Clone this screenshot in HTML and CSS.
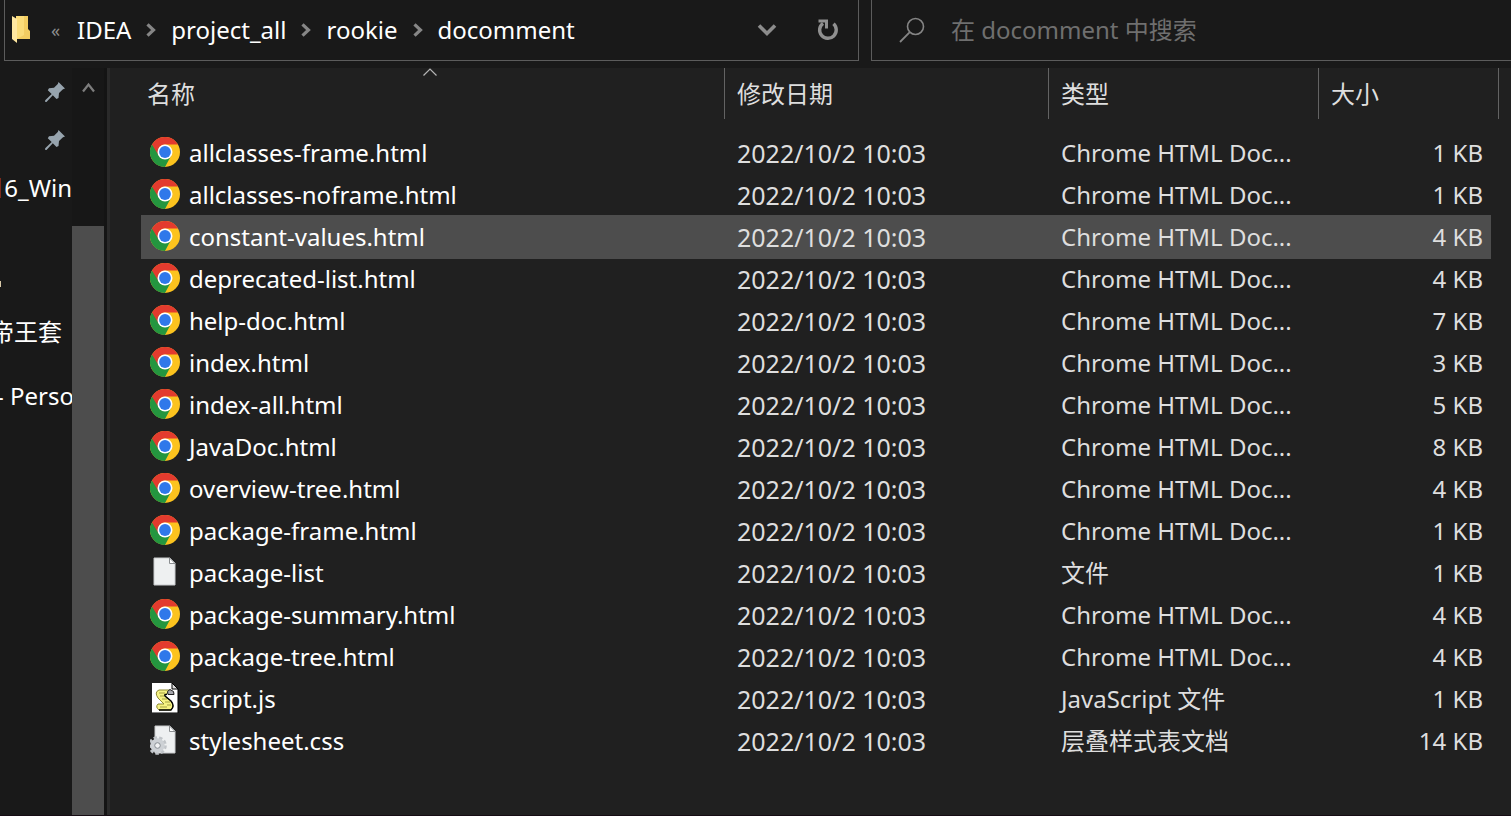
FILE: index.html
```html
<!DOCTYPE html>
<html lang="zh-CN">
<head>
<meta charset="utf-8">
<title>docomment</title>
<link rel="stylesheet" href="styles.css">
</head>
<body>
<svg class="defs" aria-hidden="true">
  <defs>
    <symbol id="chrome" viewBox="0 0 30 30">
      <circle cx="15" cy="15" r="15" fill="#fcc31e"/>
      <path d="M15 15 L21.2 18.6 L15 30 A15 15 0 0 1 2 7.5 Z" fill="#24963f"/>
      <path d="M2 7.5 A15 15 0 0 1 28 7.5 L15 7.6 A7.4 7.4 0 0 0 8.6 18.6 Z" fill="#e33b2e"/>
      <circle cx="15" cy="15" r="7.5" fill="#fff"/>
      <circle cx="15" cy="15" r="5.9" fill="#2f78ea"/>
    </symbol>
    <symbol id="page" viewBox="0 0 30 30">
      <path d="M4 1H20L25 6V28H4Z" fill="#eef0f1" stroke="#c9cbcd" stroke-width="1"/>
      <path d="M19.500 1V6.500H25Z" fill="#fff" stroke="#8b8e91" stroke-width="1"/>
    </symbol>
    <symbol id="script" viewBox="0 0 30 30">
      <path d="M2 0H22L28 6V30H2Z" fill="#fff"/>
      <path d="M28 6V30H2" fill="none" stroke="#000" stroke-width="1"/>
      <path d="M22 0V6H28Z" fill="#ddd" stroke="#000" stroke-width="1"/>
      <path d="M9 7H20Q17 9 17 11Q14 11 15 13L21 18Q25 23 21 27H9Q5 24 8 21H14L8 15Q4 9 9 7Z" fill="#f6f283" stroke="#8d8930" stroke-width="1"/>
      <path d="M20 6.500Q16 8 18 11.500H24Q25 8 20 6.500Z" fill="#a6a6ac" stroke="#222" stroke-width="1"/>
      <path d="M9 10H15M10 13H14M12 16H17M15 19H20M17 22H21M10 24H17" stroke="#a39f43" stroke-width="1"/>
      <path d="M17 11.500Q14 11 15 13L21 18Q25 23 21 27H9" fill="none" stroke="#000" stroke-width="1.400"/>
    </symbol>
    <symbol id="style" viewBox="0 0 30 30">
      <path d="M5 1H20L25 6V28H5Z" fill="#eef0f1" stroke="#c9cbcd"/>
      <path d="M19.500 1V6.500H25Z" fill="#fff" stroke="#8b8e91"/>
      <g class="gear">
        <circle cx="7.500" cy="20.500" r="7.800" fill="none" stroke="#c0c4c8" stroke-width="3" stroke-dasharray="3.300 2.150"/>
        <circle cx="7.500" cy="20.500" r="5" fill="#e9ebed" stroke="#cdd1d5" stroke-width="4.400"/>
        <circle cx="7.500" cy="20.500" r="2.800" fill="#f1f2f3" stroke="#858b91"/>
      </g>
    </symbol>
    <symbol id="pin" viewBox="0 0 20 20">
      <path d="M13.500 0L20 6.500L18 7.300L14 11L13.500 16L11.500 17L7.800 13.200L1.500 20L0 19.800L.2 18.300L6.700 12L2.800 8.200L4 6.200L9 5.800L12.800 2Z" fill="#97a4ae"/>
    </symbol>
    <symbol id="crumb" viewBox="0 0 10 14">
      <path d="M1.500 1.300L7.500 7L1.500 12.700" fill="none" stroke="#868686" stroke-width="3.200"/>
    </symbol>
  </defs>
</svg>
<div class="window">
  <header class="topbar">
    <nav class="address" aria-label="路径">
      <svg class="folder" viewBox="0 0 19 28"><path d="M4 0H16V13L18 15V23H4Z" fill="#f3cd62"/><path d="M4 0H12V19L5 23Z" fill="#fbdc79"/><path d="M0 0L5 3V27L0 23Z" fill="#ffe7a0"/></svg>
      <span class="more">«</span>
      <a href="#">IDEA</a>
      <svg class="crumb"><use href="#crumb"/></svg>
      <a href="#">project_all</a>
      <svg class="crumb"><use href="#crumb"/></svg>
      <a href="#">rookie</a>
      <svg class="crumb"><use href="#crumb"/></svg>
      <a href="#">docomment</a>
      <span class="tools">
        <button type="button" aria-label="历史记录"><svg width="20" height="14" viewBox="0 0 20 14"><path d="M2 2.500L10 10.500L18 2.500" fill="none" stroke="#8c8c8c" stroke-width="3.600"/></svg></button>
        <button type="button" aria-label="刷新"><svg width="22" height="24" viewBox="0 0 22 24"><path d="M16.500 5.800A8.300 8.300 0 1 1 6 5.300" fill="none" stroke="#909090" stroke-width="3.400"/><path d="M1.500 3H9.500V10.500" fill="none" stroke="#909090" stroke-width="3"/></svg></button>
      </span>
    </nav>
    <form class="search">
      <svg width="26" height="26" viewBox="0 0 26 26"><circle cx="16.500" cy="9.500" r="8" fill="none" stroke="#858585" stroke-width="1.600"/><path d="M10.800 15.200L1 25" stroke="#858585" stroke-width="1.800"/></svg>
      <input type="text" aria-label="搜索" placeholder="在 docomment 中搜索">
    </form>
  </header>
  <div class="body">
    <aside class="sidebar">
      <div class="side-item"><svg class="pin"><use href="#pin"/></svg></div>
      <div class="side-item"><svg class="pin"><use href="#pin"/></svg></div>
      <div class="side-item"><i class="mark red"></i><span class="label">6_Win</span></div>
      <div class="side-item"></div>
      <div class="side-item"><i class="mark pale"></i></div>
      <div class="side-item cut-cjk">帝王套</div>
      <div class="side-item cut-dash">- Perso</div>
    </aside>
    <div class="scrollbar">
      <button type="button" aria-label="向上滚动"><svg width="13" height="11" viewBox="0 0 13 11"><path d="M1 9.500L6.500 2.500L12 9.500" fill="none" stroke="#7d7d7d" stroke-width="2.200"/></svg></button>
      <div class="thumb"></div>
    </div>
    <div class="splitter"></div>
    <main class="files">
      <table>
        <colgroup><col><col class="c-date"><col class="c-type"><col class="c-size"><col class="c-end"></colgroup>
        <thead>
          <tr>
            <th class="first">名称<svg class="sort" viewBox="0 0 14 8"><path d="M.5 7.500L7 1L13.500 7.500" fill="none" stroke="#b5b5b5" stroke-width="1.200"/></svg></th>
            <th>修改日期</th><th>类型</th><th>大小</th><th class="end"></th>
          </tr>
        </thead>
        <tbody>
          <tr><td><div class="name"><svg><use href="#chrome"/></svg>allclasses-frame.html</div></td><td>2022/10/2 10:03</td><td>Chrome HTML Doc...</td><td>1 KB</td><td></td></tr>
          <tr><td><div class="name"><svg><use href="#chrome"/></svg>allclasses-noframe.html</div></td><td>2022/10/2 10:03</td><td>Chrome HTML Doc...</td><td>1 KB</td><td></td></tr>
          <tr class="hover"><td><div class="name"><svg><use href="#chrome"/></svg>constant-values.html</div></td><td>2022/10/2 10:03</td><td>Chrome HTML Doc...</td><td>4 KB</td><td></td></tr>
          <tr><td><div class="name"><svg><use href="#chrome"/></svg>deprecated-list.html</div></td><td>2022/10/2 10:03</td><td>Chrome HTML Doc...</td><td>4 KB</td><td></td></tr>
          <tr><td><div class="name"><svg><use href="#chrome"/></svg>help-doc.html</div></td><td>2022/10/2 10:03</td><td>Chrome HTML Doc...</td><td>7 KB</td><td></td></tr>
          <tr><td><div class="name"><svg><use href="#chrome"/></svg>index.html</div></td><td>2022/10/2 10:03</td><td>Chrome HTML Doc...</td><td>3 KB</td><td></td></tr>
          <tr><td><div class="name"><svg><use href="#chrome"/></svg>index-all.html</div></td><td>2022/10/2 10:03</td><td>Chrome HTML Doc...</td><td>5 KB</td><td></td></tr>
          <tr><td><div class="name"><svg><use href="#chrome"/></svg>JavaDoc.html</div></td><td>2022/10/2 10:03</td><td>Chrome HTML Doc...</td><td>8 KB</td><td></td></tr>
          <tr><td><div class="name"><svg><use href="#chrome"/></svg>overview-tree.html</div></td><td>2022/10/2 10:03</td><td>Chrome HTML Doc...</td><td>4 KB</td><td></td></tr>
          <tr><td><div class="name"><svg><use href="#chrome"/></svg>package-frame.html</div></td><td>2022/10/2 10:03</td><td>Chrome HTML Doc...</td><td>1 KB</td><td></td></tr>
          <tr><td><div class="name"><svg><use href="#page"/></svg>package-list</div></td><td>2022/10/2 10:03</td><td>文件</td><td>1 KB</td><td></td></tr>
          <tr><td><div class="name"><svg><use href="#chrome"/></svg>package-summary.html</div></td><td>2022/10/2 10:03</td><td>Chrome HTML Doc...</td><td>4 KB</td><td></td></tr>
          <tr><td><div class="name"><svg><use href="#chrome"/></svg>package-tree.html</div></td><td>2022/10/2 10:03</td><td>Chrome HTML Doc...</td><td>4 KB</td><td></td></tr>
          <tr><td><div class="name"><svg><use href="#script"/></svg>script.js</div></td><td>2022/10/2 10:03</td><td>JavaScript 文件</td><td>1 KB</td><td></td></tr>
          <tr><td><div class="name"><svg><use href="#style"/></svg>stylesheet.css</div></td><td>2022/10/2 10:03</td><td>层叠样式表文档</td><td>14 KB</td><td></td></tr>
        </tbody>
      </table>
    </main>
  </div>
</div>
</body>
</html>
```
FILE: styles.css
```css
* { box-sizing: border-box; }
body {
  margin: 0;
  background: #191919;
  color: #fff;
  font: 24px/32px "Noto Sans", "Noto Sans CJK SC", sans-serif;
}
button { padding: 0; border: 0; background: none; display: flex; align-items: center; justify-content: center; }
svg { display: block; flex: none; overflow: visible; }
.defs { position: absolute; width: 0; height: 0; }
.window { display: flex; flex-direction: column; height: 100vh; overflow: hidden; border-bottom: 1px solid #160c14; }

.topbar { flex: none; display: flex; gap: 12px; height: 68px; padding: 0 0 7px 4px; }
.address {
  flex: 0 0 855px;
  display: flex; align-items: center; gap: 15px;
  padding-left: 7px;
  border: 1px solid #5c5c5c; border-top: 0;
}
.address a { color: #fff; text-decoration: none; }
.folder { width: 19px; height: 28px; }
.more { width: 16px; padding-left: 5px; font-size: 18px; color: #8e8e8e; }
.crumb { width: 10px; height: 14px; }
.tools { display: flex; margin-left: auto; height: 100%; }
.tools button { width: 61px; }
.search {
  flex: 1; display: flex; align-items: center; gap: 26px;
  padding-left: 27px;
  border: 1px solid #5c5c5c; border-width: 0 0 1px 1px;
}
.search input { flex: 1; min-width: 0; padding: 0; border: 0; outline: 0; background: none; color: #fff; font: inherit; }
.search input::placeholder { color: #6f6f6f; opacity: 1; }

.body { flex: 1; display: flex; min-height: 0; }
.sidebar { flex: none; width: 72px; overflow: hidden; white-space: nowrap; }
.side-item { display: flex; align-items: center; height: 48px; }
.pin { width: 20px; height: 20px; margin-left: 45px; }
.mark { width: 2px; }
.red { height: 20px; background: #7c2a1c; }
.pale { height: 6px; width: 1px; background: #d8c8a8; }
.label { margin-left: 3px; }
.cut-cjk { margin-left: -10px; }
.cut-dash { margin: 16px 0 0 -4px; }

.scrollbar { flex: none; width: 32px; display: flex; flex-direction: column; background: #171717; }
.scrollbar button { height: 38px; }
.thumb { flex: 1; margin-top: 120px; background: #4d4d4d; }
.splitter { flex: none; width: 6px; background: #141414; border-right: 3px solid #2a2a2a; }

.files { flex: 1; min-width: 0; padding: 0 12px 0 31px; background: #202020; }
table { width: 100%; table-layout: fixed; border-collapse: collapse; }
.c-date { width: 324px; }
.c-type { width: 270px; }
.c-size { width: 173px; }
.c-end { width: 8px; }
th {
  position: relative;
  height: 64px; padding: 10px 0 0 13px;
  font-weight: 400; text-align: left; vertical-align: top; color: #dedede;
  background: linear-gradient(#636363, #636363) left top / 1px 51px no-repeat;
}
th.first { padding-left: 6px; background: none; }
th.end { padding: 0; background-position: right top; }
.sort { position: absolute; top: 0; left: 282px; width: 14px; height: 8px; }
td { height: 42px; padding: 0 0 0 13px; color: #dedede; white-space: nowrap; }
td:first-child { padding-left: 9px; color: #fff; }
td:nth-child(2) { font-size: 25px; }
td:nth-child(4) { padding-right: 8px; text-align: right; }
td:last-child { padding: 0; }
.name { display: flex; align-items: flex-start; gap: 9px; }
.name svg { width: 30px; height: 30px; }
.hover td:not(:last-child) { background: #4d4d4d; box-shadow: 0 -1px #4d4d4d, 0 1px #4d4d4d; }
```
